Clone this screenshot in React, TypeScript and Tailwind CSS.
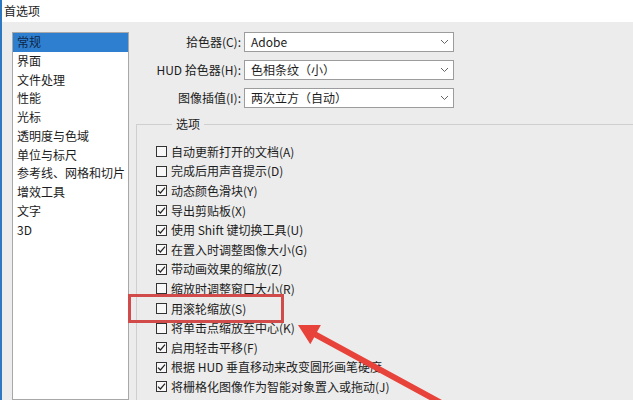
import React from 'react';

const font = "font-['Noto_Sans_CJK_SC','Noto_Sans',sans-serif]";

const categories = ['常规', '界面', '文件处理', '性能', '光标', '透明度与色域', '单位与标尺', '参考线、网格和切片', '增效工具', '文字', '3D'];

const pickers = [
    { label: '拾色器(C):', value: 'Adobe' },
    { label: 'HUD 拾色器(H):', value: '色相条纹（小）' },
    { label: '图像插值(I):', value: '两次立方（自动）' },
];

const options: [string, boolean][] = [
    ['自动更新打开的文档(A)', false],
    ['完成后用声音提示(D)', false],
    ['动态颜色滑块(Y)', true],
    ['导出剪贴板(X)', true],
    ['使用 Shift 键切换工具(U)', true],
    ['在置入时调整图像大小(G)', true],
    ['带动画效果的缩放(Z)', true],
    ['缩放时调整窗口大小(R)', false],
    ['用滚轮缩放(S)', false],
    ['将单击点缩放至中心(K)', false],
    ['启用轻击平移(F)', true],
    ['根据 HUD 垂直移动来改变圆形画笔硬度', true],
    ['将栅格化图像作为智能对象置入或拖动(J)', true],
];

const Checkbox = ({ checked }: { checked: boolean }) => (
    <span className="w-[11px] h-[11px] shrink-0 border border-[#333] bg-[#f7f7f7] flex items-center justify-center">
        {checked && (
            <svg width="9" height="9" viewBox="0 0 9 9">
                <path d="M1 4.6 L3.4 7 L8 1.6" fill="none" stroke="#222" strokeWidth="1.2" />
            </svg>
        )}
    </span>
);

export default function App() {
    return (
        <div className={`relative w-[633px] h-[400px] overflow-hidden bg-[#ececec] text-[12px] text-[#1c1c1c] ${font}`}>
            <div className="flex flex-col h-full border-l-2 border-[#2d78c0]">
                {/* title bar */}
                <div className="h-[22px] shrink-0 bg-white pl-[2px] leading-[22px]">首选项</div>

                <div className="flex flex-1 pl-[10px] pt-[10px] min-h-0">
                    {/* category list */}
                    <div className="w-[117px] shrink-0 bg-white border border-[#a8a8a8] pt-[0px]">
                        {categories.map((c, i) => (
                            <div
                                key={c}
                                className={`h-[18.75px] leading-[18.75px] pl-[4px] ${i === 0 ? 'bg-[#2f7fd0] text-[#0e2748] mx-[0px]' : ''}`}
                            >
                                {c}
                            </div>
                        ))}
                    </div>

                    {/* settings */}
                    <div className="flex flex-col ml-[7px]">
                        <div className="flex flex-col gap-[8px]">
                            {pickers.map((p) => (
                                <div key={p.label} className="flex items-center">
                                    <span className="w-[105px] text-right">{p.label}</span>
                                    <div className="ml-[3px] w-[210px] h-[20px] bg-white border border-[#9c9c9c] flex items-center justify-between pl-[6px] pr-[4px]">
                                        <span>{p.value}</span>
                                        <svg width="9" height="6" viewBox="0 0 9 6">
                                            <path d="M1 1 L4.5 4.5 L8 1" fill="none" stroke="#666" strokeWidth="1" />
                                        </svg>
                                    </div>
                                </div>
                            ))}
                        </div>

                        <fieldset className="mt-[8px] w-[520px] border border-[#cfcfcf] pl-[19px] pt-[10px] pb-[20px]">
                            <legend className="ml-[16px] px-[4px] leading-[16px]">选项</legend>
                            {options.map(([text, checked]) => (
                                <div key={text} className="flex items-center gap-[4px] h-[19.6px] whitespace-nowrap">
                                    <Checkbox checked={checked} />
                                    <span>{text}</span>
                                </div>
                            ))}
                        </fieldset>
                    </div>
                </div>
            </div>

            {/* annotation: red frame + arrow */}
            <div className="absolute left-[128px] top-[294px] w-[156px] h-[29px] border-[3px] border-[#d14b4b]" />
            <svg className="absolute inset-0 pointer-events-none" width="633" height="400" viewBox="0 0 633 400">
                <polygon
                    points="298,325 320.9,324.9 317,332 457.4,408.4 454.6,413.6 314.2,337.2 310.3,344.3"
                    fill="#e8433b"
                />
            </svg>
        </div>
    );
}
